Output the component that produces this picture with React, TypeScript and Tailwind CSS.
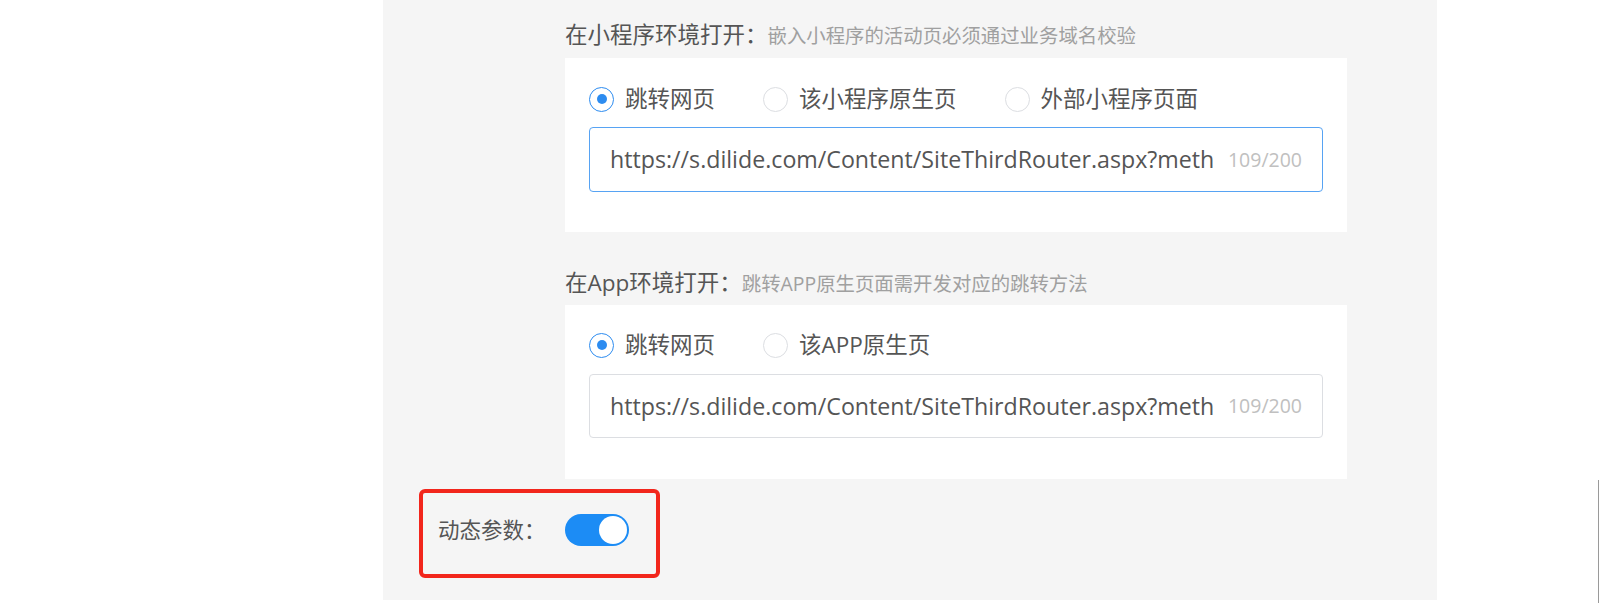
import React from 'react';

const font = { fontFamily: "'Open Sans', 'Noto Sans CJK SC', sans-serif" };

const Radio: React.FC<{ label: string; checked?: boolean }> = ({ label, checked }) => (
  <label className="flex items-center gap-[11px] h-[30px]">
    <span
      className={
        checked
          ? 'w-[25px] h-[25px] rounded-full border border-[#2d8cf0] bg-white flex items-center justify-center'
          : 'w-[25px] h-[25px] rounded-full border border-[#dcdee2] bg-white'
      }
    >
      {checked && <span className="w-[10px] h-[10px] rounded-full bg-[#2d8cf0]" />}
    </span>
    <span className="text-[22.5px] leading-[30px] text-[#555]">{label}</span>
  </label>
);

const UrlInput: React.FC<{ focused?: boolean }> = ({ focused }) => (
  <div
    className={
      focused
        ? 'h-[65px] rounded-[4px] border border-[#57a3f3] bg-white flex items-center pl-[20px] pr-[20px]'
        : 'h-[64px] rounded-[4px] border border-[#dcdee2] bg-white flex items-center pl-[20px] pr-[20px]'
    }
  >
    <span className="flex-1 text-[23.2px] text-[#555] whitespace-nowrap overflow-hidden">
      https://s.dilide.com/Content/SiteThirdRouter.aspx?meth
    </span>
    <span className="ml-[10px] text-[19.5px] text-[#c0c0c0]">109/200</span>
  </div>
);

const Heading: React.FC<{ title: string; hint: string }> = ({ title, hint }) => (
  <div className="flex items-baseline h-[30px] leading-[30px]">
    <span className="text-[22.5px] text-[#555]">{title}：</span>
    <span className="text-[19.4px] text-[#a0a0a0]">{hint}</span>
  </div>
);

export default function App() {
  return (
    <div className="relative w-[1600px] h-[603px] bg-white overflow-hidden" style={font}>
      <div className="ml-[383px] w-[1054px] h-[600px] bg-[#f5f5f5] pt-[20px]">
        <div className="pl-[182px]">
          <Heading title="在小程序环境打开" hint="嵌入小程序的活动页必须通过业务域名校验" />
          <div className="mt-[8px] w-[782px] h-[174px] bg-white px-[24px] pt-[26px]">
            <div className="flex gap-[48px]">
              <Radio label="跳转网页" checked />
              <Radio label="该小程序原生页" />
              <Radio label="外部小程序页面" />
            </div>
            <div className="mt-[13px]">
              <UrlInput focused />
            </div>
          </div>

          <div className="mt-[36px]">
            <Heading title="在App环境打开" hint="跳转APP原生页面需开发对应的跳转方法" />
          </div>
          <div className="mt-[7px] w-[782px] h-[174px] bg-white px-[24px] pt-[25px]">
            <div className="flex gap-[48px]">
              <Radio label="跳转网页" checked />
              <Radio label="该APP原生页" />
            </div>
            <div className="mt-[14px]">
              <UrlInput />
            </div>
          </div>
        </div>

        <div className="ml-[36px] mt-[10px] w-[241px] h-[89px] border-[4px] border-[#f2261c] rounded-[6px] flex items-center pl-[15px] pb-[8px]">
          <span className="text-[21.5px] text-[#555] leading-[30px]">动态参数：</span>
          <div className="ml-[19px] w-[64px] h-[32px] rounded-full bg-[#1c8cf5] flex items-center justify-end pr-[2px]">
            <span className="w-[28px] h-[28px] rounded-full bg-white" />
          </div>
        </div>
      </div>
      <div className="absolute right-[1px] top-[480px] w-px h-[123px] bg-[#9a9a9a]" />
    </div>
  );
}
